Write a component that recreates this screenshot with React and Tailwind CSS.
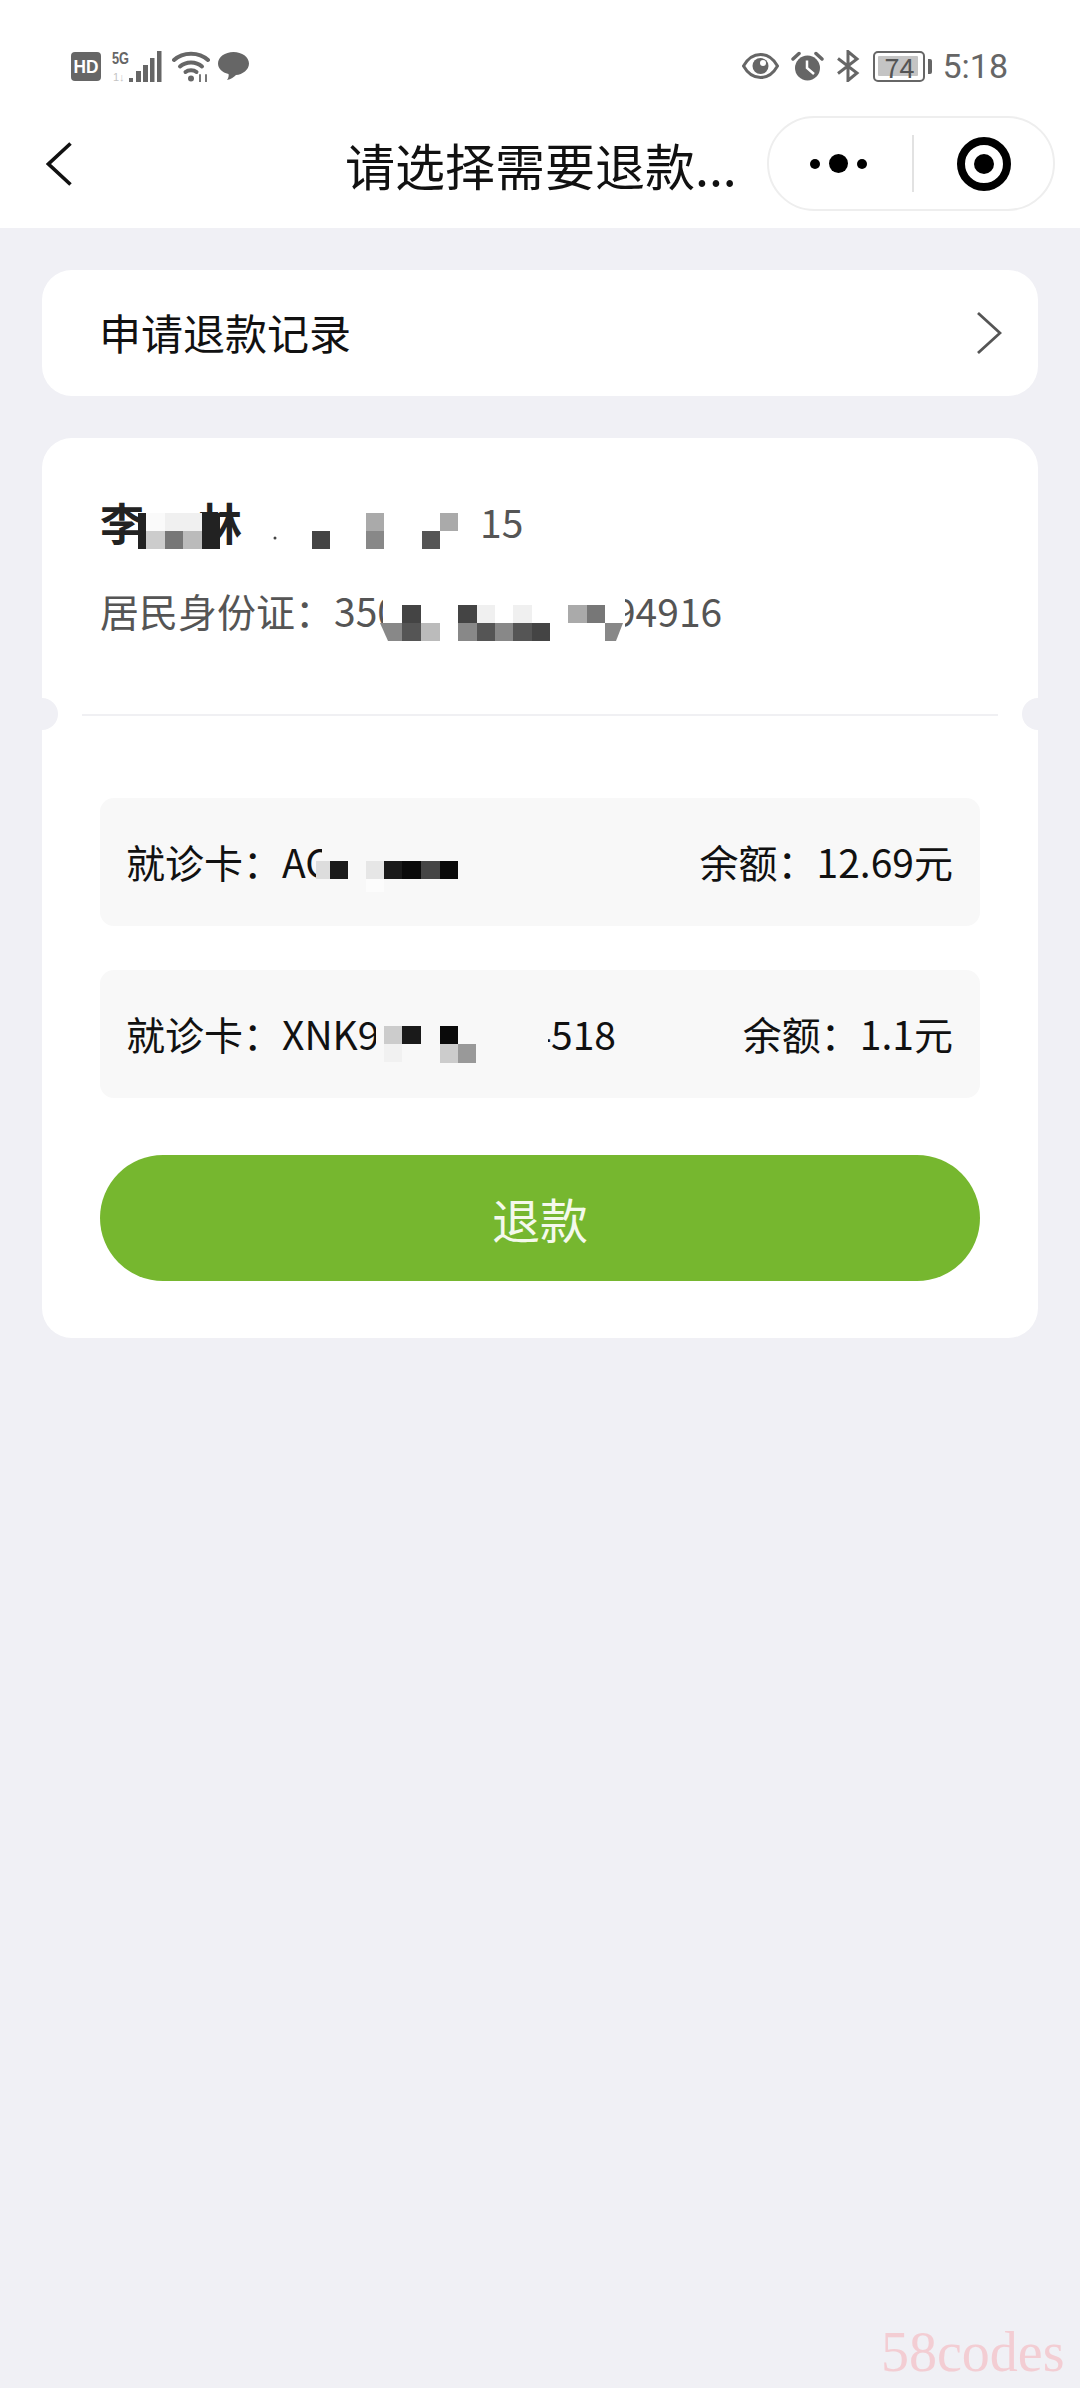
const cjk = { fontFamily: '"Noto Sans CJK SC", "Noto Sans", sans-serif' };
const COLON = '\uFF1A';

const cells = [
  // name line
  [138, 513, 8, 36, '#222'], [146, 513, 19, 18, '#fafafa'], [165, 513, 37, 18, '#f0f0f0'],
  [146, 531, 19, 18, '#ccc'], [165, 531, 18, 18, '#777'], [183, 531, 19, 18, '#bbb'],
  [202, 513, 18, 36, '#222'],
  [312, 531, 18, 18, '#444'],
  [366, 513, 18, 18, '#aaa'], [366, 531, 18, 18, '#888'],
  [422, 531, 18, 18, '#555'], [440, 513, 18, 18, '#aaa'],
  // id line
  [402, 605, 19, 18, '#444'], [402, 623, 19, 18, '#555'], [421, 623, 19, 18, '#bbb'],
  [458, 605, 19, 18, '#444'], [458, 623, 19, 18, '#888'], [477, 605, 18, 18, '#f0f0f0'],
  [477, 623, 18, 18, '#555'], [495, 623, 18, 18, '#888'], [513, 605, 19, 18, '#f0f0f0'],
  [513, 623, 19, 18, '#555'], [532, 623, 18, 18, '#444'],
  [568, 605, 19, 18, '#aaa'], [587, 605, 18, 18, '#777'],
  // card row 1
  [316, 861, 14, 18, '#ddd'], [330, 861, 18, 18, '#1a1a1a'], [366, 861, 18, 18, '#e6e6e6'],
  [384, 861, 18, 18, '#1a1a1a'], [402, 861, 19, 18, '#0a0a0a'], [421, 861, 19, 18, '#444'],
  [440, 861, 18, 18, '#0a0a0a'], [366, 879, 18, 13, '#fcfcfc'],
  // card row 2
  [384, 1026, 18, 18, '#ccc'], [402, 1026, 19, 18, '#1a1a1a'], [440, 1026, 18, 18, '#0a0a0a'],
  [440, 1044, 18, 19, '#ccc'], [458, 1044, 18, 19, '#999'], [384, 1044, 18, 18, '#f1f1f1'],
];

function Mosaic() {
  return (
    <svg className="absolute left-0 top-0 pointer-events-none" width="1080" height="1200" viewBox="0 0 1080 1200">
      {/* covers that clip the digits next to the mosaic */}
      <rect x="383" y="592" width="20" height="40" fill="#fff" />
      <rect x="608" y="592" width="17" height="40" fill="#fff" />
      <rect x="322" y="845" width="10" height="40" fill="#f8f8f8" />
      <rect x="376" y="1012" width="10" height="44" fill="#f8f8f8" />
      <rect x="528" y="1012" width="20" height="44" fill="#f8f8f8" />
      {cells.map(([x, y, w, h, c], i) => (
        <rect key={i} x={x} y={y} width={w} height={h} fill={c} />
      ))}
      <path d="M380 623H402V641H388Z" fill="#888" />
      <path d="M605 623H623L616 641H605Z" fill="#888" />
      <circle cx="275" cy="538" r="1.500" fill="#444" />
    </svg>
  );
}

function StatusLeft() {
  return (
    <div className="flex items-center">
      <svg width="30" height="29" viewBox="0 0 30 29">
        <rect width="30" height="29" rx="4" fill="#666" />
        <text x="15" y="21" textAnchor="middle" fontSize="19" fontWeight="700" fill="#fff" fontFamily="Liberation Sans" textLength="25" lengthAdjust="spacingAndGlyphs">HD</text>
      </svg>
      <svg className="ml-[11px]" width="50" height="31" viewBox="0 0 50 31">
        <text x="0" y="13" fontSize="16" fontWeight="700" fill="#666" fontFamily="Liberation Sans" textLength="17" lengthAdjust="spacingAndGlyphs">5G</text>
        <text x="1" y="30" fontSize="11" fill="#c4c4c4" fontFamily="Liberation Sans">1↓</text>
        <rect x="17" y="27" width="4" height="4" fill="#666" />
        <rect x="24" y="20" width="5" height="11" fill="#666" />
        <rect x="31" y="14" width="5" height="17" fill="#666" />
        <rect x="38" y="7" width="4.500" height="24" fill="#666" />
        <rect x="45" y="0" width="4.500" height="31" fill="#666" />
      </svg>
      <svg className="ml-[10px]" width="38" height="31" viewBox="0 0 38 31" fill="none" stroke="#666" strokeWidth="4" strokeLinecap="round">
        <path d="M2 9C11 0.500 27 0.500 36 9" />
        <path d="M8 15.500C14 10 24 10 30 15.500" />
        <path d="M13.500 21C16.500 18.500 21.500 18.500 24.500 21" />
        <circle cx="19" cy="27.500" r="3" fill="#666" stroke="none" />
        <path d="M28 24V30.500M34 24V30.500" strokeWidth="2" stroke="#777" />
      </svg>
      <svg className="ml-[8px]" width="31" height="28" viewBox="0 0 31 28">
        <path d="M15.500 0C24 0 31 5 31 11.500C31 18 24.500 22.500 18 23C16 25 13 27.500 9 28C10.500 26 11 23.500 10.500 22C4 20.500 0 16.500 0 11.500C0 5 7 0 15.500 0Z" fill="#666" />
      </svg>
    </div>
  );
}

function StatusRight() {
  return (
    <div className="flex items-center">
      <svg width="37" height="26" viewBox="0 0 37 26" fill="none">
        <path d="M1.500 13C6 5 12 1.500 18.500 1.500S31 5 35.500 13C31 21 25 24.500 18.500 24.500S6 21 1.500 13Z" stroke="#666" strokeWidth="3" />
        <circle cx="18.500" cy="13" r="8" fill="#666" />
        <circle cx="21" cy="10" r="3" fill="#fff" />
      </svg>
      <svg className="ml-[12px]" width="33" height="30" viewBox="0 0 33 30" fill="none">
        <circle cx="16.500" cy="17" r="12.500" fill="#666" />
        <path d="M16 9.500V17L23 23" stroke="#fff" strokeWidth="2.500" />
        <path d="M2 8L8 2.500M31 8L25 2.500" stroke="#666" strokeWidth="3.500" strokeLinecap="round" />
      </svg>
      <svg className="ml-[12px]" width="24" height="32" viewBox="0 0 24 32" fill="none" stroke="#666" strokeWidth="3">
        <path d="M2 8.500L21 23L12 30.500V1.500L21 9L2 23.500" />
      </svg>
      <div className="relative ml-[13px] flex h-[31px] w-[52px] items-center justify-center rounded-[5px] border-[2.5px] border-[#666] text-[27px] leading-none text-[#555]" style={cjk}>
        <div className="absolute left-[3px] top-[3px] h-[20px] w-[40px] rounded-[1px] bg-[#c4c4c4]" />
        <span className="relative">74</span>
      </div>
      <div className="ml-[3px] h-[15px] w-[4px] rounded-r-[2px] bg-[#666]" />
      <span className="ml-[10px] text-[34px] leading-none text-[#666]" style={{ fontFamily: 'Roboto, sans-serif' }}>5:18</span>
    </div>
  );
}

function CardRow({ children, amount, mt }) {
  return (
    <div className={`flex h-[128px] items-center justify-between rounded-[14px] bg-[#f8f8f8] pl-[26px] pr-[27px] text-[39px] leading-none text-[#111] ${mt ? 'mt-[44px]' : ''}`}>
      <span className="-translate-y-px whitespace-pre">就诊卡{COLON}{children}</span>
      <span className="-translate-y-px">余额{COLON}{amount}元</span>
    </div>
  );
}

export default function App() {
  return (
    <div className="relative h-[2388px] w-[1080px] overflow-hidden bg-[#f0f0f5]" style={cjk}>
      <header className="h-[228px] bg-white">
        <div className="flex items-center justify-between pl-[71px] pr-[72px] pt-[49px]">
          <StatusLeft />
          <StatusRight />
        </div>
        <div className="mt-[33px] flex items-center">
          <svg className="ml-[46px]" width="26" height="44" viewBox="0 0 26 44" fill="none" stroke="#111" strokeWidth="3.600">
            <path d="M24.500 1.500L2.500 22L24.500 42.500" />
          </svg>
          <h1 className="ml-[273px] w-[422px] whitespace-nowrap text-[50px] font-normal leading-none text-[#111]">请选择需要退款...</h1>
          <div className="flex h-[95px] w-[288px] items-center rounded-full border-2 border-[#eeeeee]">
            <div className="flex w-[143px] items-center justify-center gap-[9px] pr-[5px]">
              <span className="h-[10px] w-[10px] rounded-full bg-black" />
              <span className="h-[19px] w-[19px] rounded-full bg-black" />
              <span className="h-[10px] w-[10px] rounded-full bg-black" />
            </div>
            <div className="h-[57px] w-[2px] bg-[#e2e2e2]" />
            <div className="flex flex-1 items-center justify-center">
              <div className="flex h-[54px] w-[54px] items-center justify-center rounded-full border-[8px] border-black">
                <span className="h-[20px] w-[20px] rounded-full bg-black" />
              </div>
            </div>
          </div>
        </div>
      </header>

      <section className="mx-[42px] mt-[42px] flex h-[126px] items-center justify-between rounded-[30px] bg-white pl-[57px] pr-[36px]">
        <span className="-translate-y-px text-[42px] leading-none text-[#111]">申请退款记录</span>
        <svg width="26" height="44" viewBox="0 0 26 44" fill="none" stroke="#555" strokeWidth="2.800">
          <path d="M2 2L24 22L2 42" />
        </svg>
      </section>

      <section className="relative mx-[42px] mt-[42px] h-[900px] rounded-[30px] bg-white">
        <div className="h-[276px] px-[58px] pt-[56px]">
          <div className="flex h-[56px] items-center">
            <span className="text-[44px] font-bold leading-none text-[#222]">李</span>
            <span className="ml-[54px] text-[44px] font-bold leading-none text-[#222]">林</span>
            <span className="ml-[238px] -translate-y-px text-[39px] leading-none text-[#555]">15</span>
          </div>
          <div className="mt-[32px] flex h-[56px] items-center whitespace-pre text-[39px] leading-none text-[#555]">
            <span>居民身份证{COLON}350</span>
            <span className="w-[215px]" />
            <span>94916</span>
          </div>
        </div>
        <div className="mx-[40px] h-[2px] bg-[#f0f0f3]" />
        <div className="absolute left-[-16px] top-[260px] h-[32px] w-[32px] rounded-full bg-[#f0f0f5]" />
        <div className="absolute right-[-16px] top-[260px] h-[32px] w-[32px] rounded-full bg-[#f0f0f5]" />
        <div className="mt-[82px] px-[58px]">
          <CardRow amount="12.69">AC</CardRow>
          <CardRow amount="1.1" mt>
            XNK9<span className="inline-block w-[150px]" />4518
          </CardRow>
          <button className="mt-[57px] flex h-[126px] w-full items-center justify-center rounded-full bg-[#76b72f] text-[48px] leading-none text-[#f4f9ec]">退款</button>
        </div>
      </section>

      <Mosaic />

      <div className="absolute bottom-[8px] left-[881px] text-[56px] leading-none text-[#f3cdd3]" style={{ fontFamily: '"Liberation Serif", serif' }}>58codes</div>
    </div>
  );
}
